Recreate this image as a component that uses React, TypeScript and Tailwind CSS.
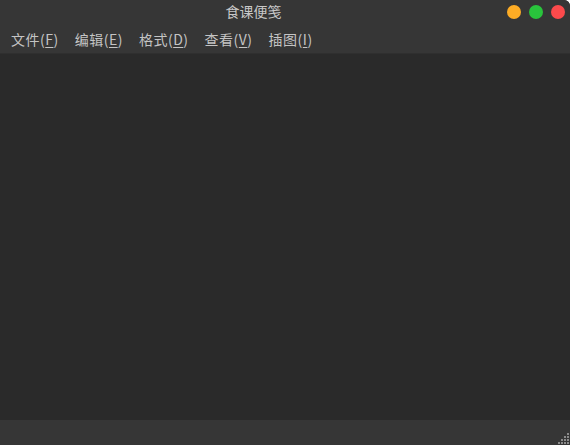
import React from "react";

const font = { fontFamily: '"Noto Sans CJK SC", "Noto Sans", sans-serif' };

function MenuItem({ label, k }: { label: string; k: string }) {
  return (
    <span className="text-[14px] text-[#c4c4c4] leading-none tracking-[0.5px]">
      {label}(<span className="underline underline-offset-2">{k}</span>)
    </span>
  );
}

function Grip() {
  const dots: [number, number][] = [];
  for (let r = 0; r < 4; r++) {
    for (let c = 0; c < 4; c++) {
      if (c >= 3 - r) dots.push([c, r]);
    }
  }
  return (
    <svg width="12" height="12" viewBox="0 0 12 12" className="absolute right-0 bottom-0">
      {dots.map(([c, r], i) => (
        <rect key={i} x={c * 3} y={r * 3} width="2" height="2" fill="#8a8a8a" />
      ))}
    </svg>
  );
}

export default function App() {
  return (
    <div className="w-[570px] h-[445px] flex flex-col bg-[#2a2a2a] overflow-hidden rounded-tr-[6px]" style={font}>
      <div className="bg-[#363636] h-[54px] flex flex-col border-b border-[#2f2f2f]">
        <div className="h-[22px] flex items-center">
          <div className="flex-1 flex justify-center">
            <span className="text-[14px] text-[#c8c8c8] leading-none">食课便笺</span>
          </div>
          <div className="flex gap-[8px] pr-[5px] pt-[1px]">
            <div className="w-[14px] h-[14px] rounded-full bg-[#fdac25]" />
            <div className="w-[14px] h-[14px] rounded-full bg-[#29c43c]" />
            <div className="w-[14px] h-[14px] rounded-full bg-[#fc4a4c]" />
          </div>
        </div>
        <div className="flex-1 flex items-center pl-[11px] gap-[16px] pt-[3px]">
          <MenuItem label="文件" k="F" />
          <MenuItem label="编辑" k="E" />
          <MenuItem label="格式" k="D" />
          <MenuItem label="查看" k="V" />
          <MenuItem label="插图" k="I" />
        </div>
      </div>
      <div className="flex-1 bg-[#2a2a2a]" />
      <div className="h-[25px] bg-[#363636] relative">
        <Grip />
      </div>
    </div>
  );
}
